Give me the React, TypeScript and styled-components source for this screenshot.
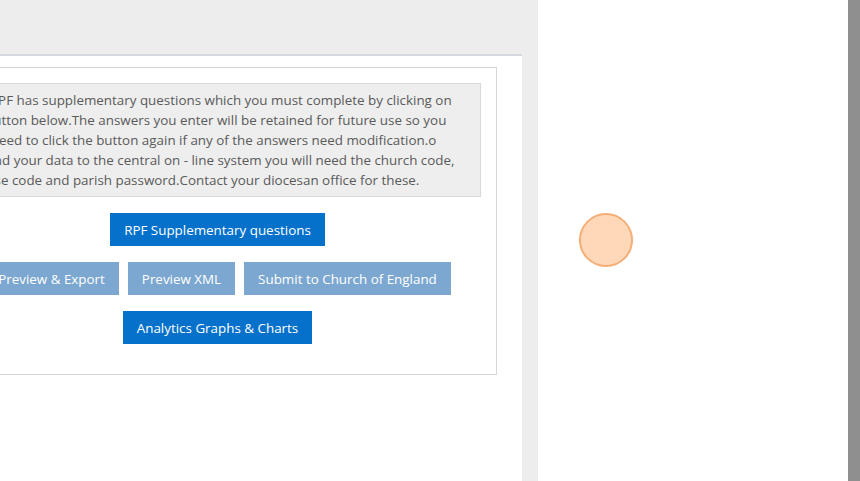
import styled, { createGlobalStyle } from 'styled-components';

const GlobalStyle = createGlobalStyle`
  html, body {
    margin: 0;
    padding: 0;
  }
  body {
    font-family: 'Open Sans', 'Noto Sans', sans-serif;
    overflow: hidden;
  }
`;

const Page = styled.div`
  display: flex;
  width: 860px;
  height: 481px;
`;

const LeftArea = styled.div`
  width: 538px;
  flex-shrink: 0;
  background-color: #eeeded;
  overflow: hidden;
  display: flex;
  justify-content: flex-end;
  align-items: flex-start;
  padding: 54px 16px 0 0;
  box-sizing: border-box;
`;

const Card = styled.div`
  width: 609px;
  flex-shrink: 0;
  height: 100%;
  box-sizing: border-box;
  background-color: #ffffff;
  border-top: 2px solid #d5d9df;
  padding: 11px 25px;
`;

const InnerBox = styled.div`
  border: 1px solid #d6d6d6;
  padding: 15px 15px 30px;
  text-align: center;
`;

const Notice = styled.div`
  background-color: #eeeeee;
  border: 1px solid #d9d9d9;
  padding: 6px 6px;
  color: #5a5a5a;
  font-size: 13.4px;
  line-height: 20px;
  text-align: left;
  white-space: nowrap;
`;

const ButtonRow = styled.div`
  display: flex;
  justify-content: center;
  gap: 9px;
  margin-top: 16px;
`;

const Button = styled.div<{ muted?: boolean }>`
  height: 33px;
  padding: 0 14px;
  display: flex;
  align-items: center;
  white-space: nowrap;
  color: #ffffff;
  font-size: 13.4px;
  background-color: ${props => (props.muted ? '#7ca7d0' : '#0571cb')};
  cursor: pointer;
`;

const RightPanel = styled.div`
  position: relative;
  flex: 1;
  background-color: #ffffff;
  border-right: 12px solid #8f8f8f;
`;

const ClickMarker = styled.div`
  position: absolute;
  left: 41px;
  top: 213px;
  width: 54px;
  height: 54px;
  border-radius: 50%;
  background-color: #fed8b9;
  border: 2px solid #f5ae76;
  box-sizing: border-box;
`;

function App() {
  return (
    <Page>
      <GlobalStyle />
      <LeftArea>
        <Card>
          <InnerBox>
            <Notice>
              This RPF has supplementary questions which you must complete by clicking on
              <br />
              the button below.The answers you enter will be retained for future use so you
              <br />
              only need to click the button again if any of the answers need modification.o
              <br />
              To send your data to the central on - line system you will need the church code,
              <br />
              diocese code and parish password.Contact your diocesan office for these.
            </Notice>
            <ButtonRow>
              <Button>RPF Supplementary questions</Button>
            </ButtonRow>
            <ButtonRow>
              <Button muted>Preview &amp; Export</Button>
              <Button muted>Preview XML</Button>
              <Button muted>Submit to Church of England</Button>
            </ButtonRow>
            <ButtonRow>
              <Button>Analytics Graphs &amp; Charts</Button>
            </ButtonRow>
          </InnerBox>
        </Card>
      </LeftArea>
      <RightPanel>
        <ClickMarker />
      </RightPanel>
    </Page>
  );
}

export default App;
